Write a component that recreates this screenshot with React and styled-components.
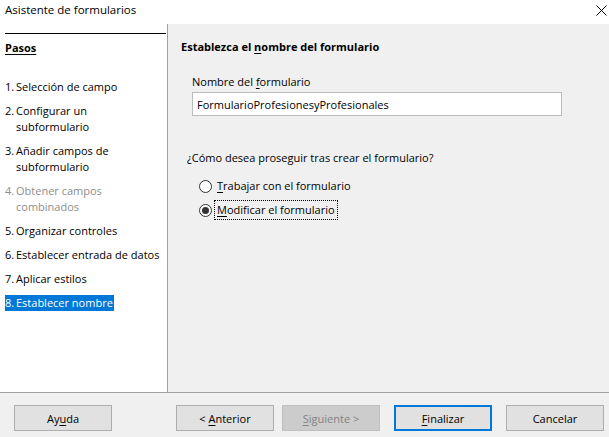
import React from "react";
import styled, { createGlobalStyle, css } from "styled-components";

const Global = createGlobalStyle`
  html, body { margin: 0; padding: 0; background: #ffffff; }
  body { font-family: "Open Sans", "Noto Sans", sans-serif; font-size: 11px; color: #000; }
  * { box-sizing: border-box; }
`;

const Window = styled.div`
  width: 609px;
  height: 437px;
  display: flex;
  flex-direction: column;
  background: #f0f0f0;
  overflow: hidden;
`;

const TitleBar = styled.div`
  height: 24px;
  background: #ffffff;
  display: flex;
  align-items: center;
  justify-content: space-between;
  padding: 0 2px 6px 5px;
  font-size: 11.5px;
  color: #000;
`;

const CloseIcon = styled.svg`
  width: 11px;
  height: 11px;
  margin-top: 2px;
`;

const Main = styled.div`
  flex: 1;
  display: flex;
  min-height: 0;
`;

const Sidebar = styled.div`
  width: 168px;
  background: #ffffff;
  border-right: 1px solid #a0a0a0;
  padding: 9px 0 0 5px;
  display: flex;
  flex-direction: column;
`;

const SidebarHeader = styled.div`
  border-top: 1px solid #000000;
  margin-right: 1px;
  padding-top: 6px;
  line-height: 16px;
  font-weight: 700;
  text-decoration: underline;
  text-underline-offset: 2px;
`;

const StepList = styled.ol`
  list-style: none;
  margin: 23px 0 0 0;
  padding: 0;
  display: flex;
  flex-direction: column;
  gap: 8px;
`;

const Step = styled.li`
  display: flex;
  align-self: flex-start;
  line-height: 16px;
  color: ${(p) => (p.$disabled ? "#8d8d8d" : "#000")};
  ${(p) =>
    p.$active &&
    css`
      background: #0078d7;
      color: #ffffff;
      padding-right: 1px;
    `}
`;

const StepNum = styled.span`
  width: 11px;
  flex: none;
`;

const StepText = styled.span`
  display: flex;
  flex-direction: column;
  white-space: nowrap;
`;

const Content = styled.div`
  flex: 1;
  padding: 15px 0 0 13px;
  display: flex;
  flex-direction: column;
`;

const Heading = styled.div`
  font-weight: 700;
  line-height: 16px;
`;

const Field = styled.div`
  margin: 19px 0 0 11px;
  display: flex;
  flex-direction: column;
  gap: 2px;
`;

const Label = styled.div`
  line-height: 16px;
`;

const TextInput = styled.div`
  width: 370px;
  height: 24px;
  background: #ffffff;
  border: 1px solid #bcbcbc;
  display: flex;
  align-items: center;
  padding-left: 4px;
`;

const Question = styled.div`
  margin: 34px 0 0 6px;
  line-height: 16px;
`;

const RadioGroup = styled.div`
  margin: 12px 0 0 18px;
  display: flex;
  flex-direction: column;
  gap: 8px;
`;

const RadioRow = styled.label`
  display: flex;
  align-items: center;
  gap: 5px;
  line-height: 16px;
`;

const RadioCircle = styled.span`
  width: 13px;
  height: 13px;
  border-radius: 50%;
  border: 1px solid #333333;
  background: #ffffff;
  display: flex;
  align-items: center;
  justify-content: center;
  &::after {
    content: "";
    width: 7px;
    height: 7px;
    border-radius: 50%;
    background: ${(p) => (p.$checked ? "#333333" : "transparent")};
  }
`;

const RadioLabel = styled.span`
  outline: ${(p) => (p.$focused ? "1px dotted #000" : "none")};
  outline-offset: 1px;
  padding: 0 1px;
  margin-left: -1px;
`;

const U = styled.span`
  text-decoration: underline;
  text-underline-offset: 2px;
`;

const Footer = styled.div`
  height: 45px;
  border-top: 1px solid #a0a0a0;
  background: #f0f0f0;
  display: flex;
  align-items: flex-start;
  padding: 12px 5px 0 14px;
`;

const Button = styled.div`
  width: 98px;
  height: 26px;
  display: flex;
  align-items: center;
  justify-content: center;
  white-space: pre;
  background: ${(p) => (p.$disabled ? "#cccccc" : "#e1e1e1")};
  border: ${(p) =>
    p.$default ? "2px solid #0078d7" : p.$disabled ? "1px solid #bfbfbf" : "1px solid #adadad"};
  color: ${(p) => (p.$disabled ? "#838383" : "#000")};
  margin-left: ${(p) => p.$gap || 0}px;
`;

const steps = [
  { n: "1.", lines: ["Selección de campo"] },
  { n: "2.", lines: ["Configurar un", "subformulario"] },
  { n: "3.", lines: ["Añadir campos de", "subformulario"] },
  { n: "4.", lines: ["Obtener campos", "combinados"], disabled: true },
  { n: "5.", lines: ["Organizar controles"] },
  { n: "6.", lines: ["Establecer entrada de datos"] },
  { n: "7.", lines: ["Aplicar estilos"] },
  { n: "8.", lines: ["Establecer nombre"], active: true },
];

export default function App() {
  return (
    <>
      <Global />
      <Window>
        <TitleBar>
          <span>Asistente de formularios</span>
          <CloseIcon viewBox="0 0 11 11">
            <path d="M0.5 0.5 L10.5 10.5 M10.5 0.5 L0.5 10.5" stroke="#000" strokeWidth="1" fill="none" />
          </CloseIcon>
        </TitleBar>
        <Main>
          <Sidebar>
            <SidebarHeader>Pasos</SidebarHeader>
            <StepList>
              {steps.map((s) => (
                <Step key={s.n} $disabled={s.disabled} $active={s.active}>
                  <StepNum>{s.n}</StepNum>
                  <StepText>
                    {s.lines.map((l) => (
                      <span key={l}>{l}</span>
                    ))}
                  </StepText>
                </Step>
              ))}
            </StepList>
          </Sidebar>
          <Content>
            <Heading>
              Establezca el <U>n</U>ombre del formulario
            </Heading>
            <Field>
              <Label>
                Nombre del <U>f</U>ormulario
              </Label>
              <TextInput>FormularioProfesionesyProfesionales</TextInput>
            </Field>
            <Question>¿Cómo desea proseguir tras crear el formulario?</Question>
            <RadioGroup>
              <RadioRow>
                <RadioCircle />
                <RadioLabel>
                  <U>T</U>rabajar con el formulario
                </RadioLabel>
              </RadioRow>
              <RadioRow>
                <RadioCircle $checked />
                <RadioLabel $focused>
                  <U>M</U>odificar el formulario
                </RadioLabel>
              </RadioRow>
            </RadioGroup>
          </Content>
        </Main>
        <Footer>
          <Button>
            <span>
              Ay<U>u</U>da
            </span>
          </Button>
          <Button $gap={64}>
            <span>
              {"< "}
              <U>A</U>nterior
            </span>
          </Button>
          <Button $gap={8} $disabled>
            <span>
              <U>S</U>iguiente {">"}
            </span>
          </Button>
          <Button $gap={14} $default>
            <span>
              <U>F</U>inalizar
            </span>
          </Button>
          <Button $gap={14}>
            <span>Cancelar</span>
          </Button>
        </Footer>
      </Window>
    </>
  );
}
